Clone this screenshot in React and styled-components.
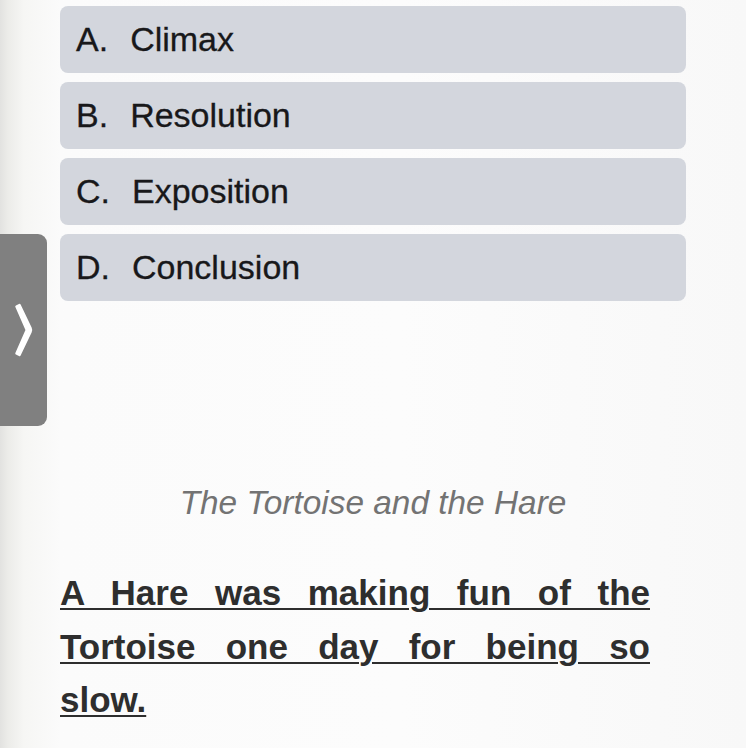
import React from 'react';
import styled, { createGlobalStyle } from 'styled-components';

const GlobalStyle = createGlobalStyle`
  html, body {
    margin: 0;
    padding: 0;
    background: #f8f8f8;
  }
  body {
    font-family: "Liberation Sans", Arial, Helvetica, sans-serif;
  }
`;

const options = [
  { key: 'A.', text: 'Climax' },
  { key: 'B.', text: 'Resolution' },
  { key: 'C.', text: 'Exposition' },
  { key: 'D.', text: 'Conclusion' },
];

const Page = () => {
  return (
    <>
      <GlobalStyle />
      <Screen>
        <Content>
          <OptionList>
            {options.map((o) => (
              <Option key={o.key}>
                <Letter>{o.key}</Letter>
                <span>{o.text}</span>
              </Option>
            ))}
          </OptionList>
          <StoryTitle>The Tortoise and the Hare</StoryTitle>
          <Passage>
            A Hare was making fun of the Tortoise one day for being so<br />slow.
          </Passage>
        </Content>
        <SideTab aria-label="open">
          <svg width="28" height="64" viewBox="0 0 28 64">
            <path
              d="M5.5 8.5 L8.5 7 L19.5 30 Q20.5 32 19.5 34 L8.5 57 L5.5 55.5 L15.8 32 Z"
              fill="#ffffff"
              stroke="#ffffff"
              strokeWidth="2.5"
              strokeLinejoin="round"
            />
          </svg>
        </SideTab>
      </Screen>
    </>
  );
};

const Screen = styled.div`
  position: relative;
  width: 746px;
  height: 748px;
  overflow: hidden;
  background: linear-gradient(
    to right,
    #e2e2e0 0px,
    #ecece9 8px,
    #f6f6f4 24px,
    #fbfbfb 60px,
    #fcfcfc 400px,
    #f8f8f8 746px
  );
`;

const Content = styled.div`
  width: 626px;
  padding: 6px 0 0 60px;
`;

const OptionList = styled.div`
  display: flex;
  flex-direction: column;
  gap: 9px;
`;

const Option = styled.div`
  display: flex;
  align-items: center;
  height: 67px;
  padding-left: 16px;
  border-radius: 8px;
  background: #d3d6dd;
  color: #18181a;
  font-size: 34px;
  -webkit-text-stroke: 0.3px #18181a;
`;

const Letter = styled.span`
  margin-right: 22px;
`;

const StoryTitle = styled.div`
  margin-top: 182px;
  text-align: center;
  font-size: 33.4px;
  line-height: 40px;
  font-style: italic;
  color: #737373;
`;

const Passage = styled.p`
  width: 590px;
  margin: 43px 0 0;
  font-size: 35px;
  line-height: 53.5px;
  font-weight: bold;
  color: #2e2e2e;
  text-align: justify;
  text-align-last: justify;
  text-decoration: underline;
  text-decoration-thickness: 2px;
  text-underline-offset: 3px;
`;

const SideTab = styled.div`
  position: absolute;
  left: -10px;
  top: 234px;
  width: 57px;
  height: 192px;
  display: flex;
  align-items: center;
  justify-content: center;
  border-radius: 9px;
  background: #808080;
  svg { flex: none; margin: 0 0 0 12px; }
`;

export default Page;
